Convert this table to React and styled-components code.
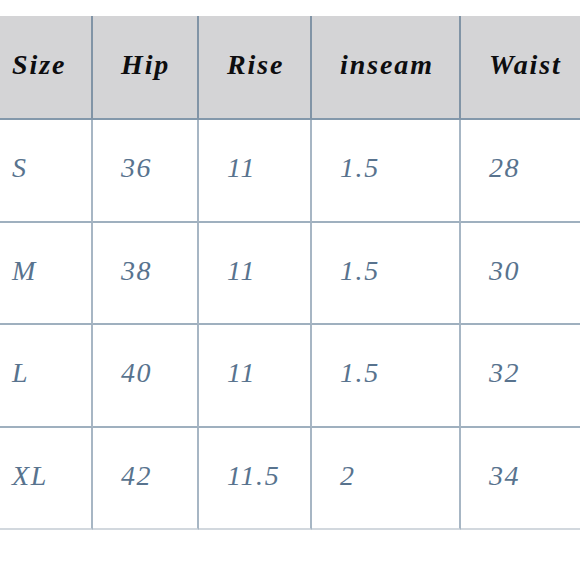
import React from "react";
import styled, { createGlobalStyle } from "styled-components";

const Global = createGlobalStyle`
  html, body { margin: 0; padding: 0; background: #ffffff; }
  body { font-family: "Liberation Serif", "DejaVu Serif", serif; }
`;

const Page = styled.div`
  width: 580px;
  height: 580px;
  padding-top: 16px;
  box-sizing: border-box;
  overflow: hidden;
  background: #ffffff;
`;

const Grid = styled.div`
  display: grid;
  grid-template-columns: 93px 106px 113px 149px 119px;
  grid-template-rows: 104px repeat(4, 102.5px);
`;

const Cell = styled.div`
  box-sizing: border-box;
  display: flex;
  align-items: center;
  padding: 0 0 4px ${(p) => (p.$first ? "12px" : "28px")};
  border-right: ${(p) => (p.$last ? "none" : `2px solid ${p.$head ? "#8194a6" : "#a7b6c4"}`)};
  border-bottom: 2px solid ${(p) => (p.$head ? "#8398ab" : p.$bottom ? "#d2d8de" : "#9fb0bf")};
  background: ${(p) => (p.$head ? "#d4d4d6" : "#ffffff")};
  font-style: italic;
  white-space: nowrap;
`;

const HeadText = styled.span`
  font-family: "Liberation Serif", serif;
  font-weight: 700;
  font-size: 28px;
  letter-spacing: 1.9px;
  color: #0d0d0f;
`;

const DataText = styled.span`
  font-family: "Liberation Serif", serif;
  font-weight: 400;
  font-size: 28px;
  letter-spacing: 1.6px;
  color: #58738e;
`;

const headers = ["Size", "Hip", "Rise", "inseam", "Waist"];
const rows = [
  ["S", "36", "11", "1.5", "28"],
  ["M", "38", "11", "1.5", "30"],
  ["L", "40", "11", "1.5", "32"],
  ["XL", "42", "11.5", "2", "34"],
];

export default function App() {
  return (
    <Page>
      <Global />
      <Grid>
        {headers.map((h, i) => (
          <Cell key={h} $head $first={i === 0} $last={i === headers.length - 1}>
            <HeadText>{h}</HeadText>
          </Cell>
        ))}
        {rows.map((r, ri) =>
          r.map((v, ci) => (
            <Cell
              key={`${ri}-${ci}`}
              $first={ci === 0}
              $last={ci === r.length - 1}
              $bottom={ri === rows.length - 1}
            >
              <DataText>{v}</DataText>
            </Cell>
          ))
        )}
      </Grid>
    </Page>
  );
}
